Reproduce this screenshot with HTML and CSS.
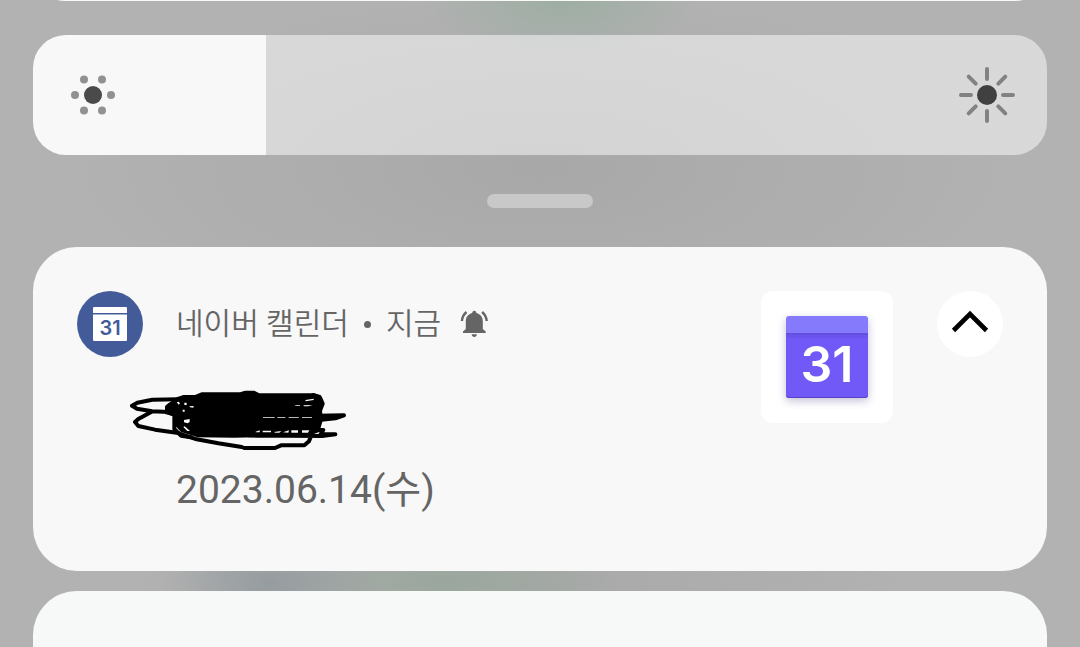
FILE: index.html
```html
<!DOCTYPE html>
<html lang="ko">
<head>
    <meta charset="UTF-8">
    <meta name="viewport" content="width=device-width, initial-scale=1.0">
    <title>알림</title>
    <link rel="stylesheet" href="styles.css">
</head>
<body>

    <div class="quick-panel"></div>

    <div class="brightness">
        <input type="range" class="brightness-slider" aria-label="밝기" min="0" max="100" value="23" style="--level: 23%">
        <svg class="sun-low" viewBox="0 0 60 60" aria-hidden="true">
            <circle cx="30" cy="30" r="9" fill="#4a4a4a"/>
            <g fill="#919191">
                <circle cx="12" cy="30" r="4"/>
                <circle cx="48" cy="30" r="4"/>
                <circle cx="21" cy="14.5" r="4"/>
                <circle cx="39" cy="14.5" r="4"/>
                <circle cx="21" cy="45.5" r="4"/>
                <circle cx="39" cy="45.5" r="4"/>
            </g>
        </svg>
        <svg class="sun-high" viewBox="0 0 60 60" aria-hidden="true">
            <circle cx="30" cy="30" r="10" fill="#404040"/>
            <path d="M30 4v10M30 46v10M4 30h10M46 30h10M11.7 11.7l7 7M41.3 41.3l7 7M48.3 11.7l-7 7M18.7 41.3l-7 7" stroke="#828282" stroke-width="4" stroke-linecap="round"/>
        </svg>
    </div>

    <div class="handle"></div>

    <main class="notifications">
        <article class="card">
            <svg class="app-icon" viewBox="0 0 66 66" aria-hidden="true">
                <circle cx="33" cy="33" r="33" fill="#435c99"/>
                <path d="M17 16h32a1 1 0 0 1 1 1v5H16v-5a1 1 0 0 1 1-1zM16 23.5h34V49a1 1 0 0 1-1 1H17a1 1 0 0 1-1-1z" fill="#fff"/>
                <text class="icon-day" x="33" y="44" font-size="20" fill="#435c99">31</text>
            </svg>

            <div class="content">
                <div class="meta">
                    <span>네이버 캘린더</span>
                    <span class="dot"></span>
                    <span>지금</span>
                    <svg class="bell" viewBox="0 0 28 28" aria-hidden="true">
                        <path d="M14.3.7c1.3 0 2.1.9 2.1 2.4 4 1 6.4 4.2 6.4 8.2V19l2.9 2.6V23H3v-1.4L5.8 19v-7.7c0-4 2.4-7.2 6.4-8.2 0-1.5.8-2.4 2.1-2.4zM11.7 24.3h5.2c-.2 1.7-1.2 2.7-2.6 2.7s-2.4-1-2.6-2.7z" fill="#656565"/>
                        <path d="M1.9 11C2.2 7.2 3.8 4.2 6.5 2M26.7 11c-.3-3.8-1.9-6.8-4.6-9" fill="none" stroke="#656565" stroke-width="2.4"/>
                    </svg>
                </div>
                <svg class="scribble" viewBox="27 27 654 180" aria-hidden="true">
                    <path d="M170 52l20-7h35l20-8h115l15-5h28l15 8h165l20 6 2 26 3 50-10 34-40 14-215 3-110-1-50-16-24-26V108l-24-6V78z"/>
                    <g fill="none" stroke="#000" stroke-width="12" stroke-linecap="round" stroke-linejoin="round">
                        <path d="M175 58l-78 1-45 9-16 9 15 9 45 8 50 2M95 95L55 117l-10 9 10 12 50 11 65 9 60 20 65 12 70 11 8 3h92l18-8h70l14-12 10-26M580 45l20 8 8 18-10 26M590 107l82-1-26 9-56 6M560 150l50 0-8 12 44 1-40 5-220-2"/>
                        <path d="M165 65l-20 12 0 20 18 8v42l20 20 30 5"/>
                    </g>
                    <path d="M170 67l6-2 4 5-4 4zM193 68h7v7h-7zM208 79l13-1-1 5-10-1zM188 89h6v6h-6zM192 120l17-3v9l-6 4-11-3zM190 141l12 12h8l-16-14zM556 60l25-4v4l-24 4zM526 76h14v2h-14zM550 76l28-1-14 4h-12zM429 112h35v2h-35zM472 112h24v2h-24zM506 112h30v2h-30zM546 112h30v2h-30zM407 155l12-4v6h-12zM428 152h25v5h-25zM462 156l22-3-6 5h-12zM489 157l18-6-2 7zM514 151h20v7h-20zM546 151h22l-4 7h-18z" fill="#f8f8f8"/>
                </svg>
                <time class="date" datetime="2023-06-14">2023.06.14(수)</time>
            </div>

            <div class="large-icon">
                <div class="calendar">
                    <svg viewBox="0 0 82 82" aria-hidden="true">
                        <path d="M0 17h82v62a3 3 0 0 1-3 3H3a3 3 0 0 1-3-3z" fill="#7159f8"/>
                        <path d="M0 17h82v2H0z" fill="#654fe0"/>
                        <path d="M0 19h82v3H0z" fill="#6b54ee"/>
                        <path d="M3 0h76a3 3 0 0 1 3 3v14H0V3a3 3 0 0 1 3-3z" fill="#8579fc"/>
                        <path d="M0 79a3 3 0 0 0 3 2h76a3 3 0 0 0 3-2 3 3 0 0 1-3 3H3a3 3 0 0 1-3-3z" fill="#5942c4"/>
                        <text class="icon-day" x="41" y="66" font-size="50" fill="#fff">31</text>
                    </svg>
                </div>
            </div>

            <button type="button" class="collapse" aria-label="접기">
                <svg viewBox="0 0 66 66" aria-hidden="true">
                    <path d="M16.5 39.5L33 23 49.5 39.5" fill="none" stroke="#000" stroke-width="4.6"/>
                </svg>
            </button>
        </article>

        <article class="card next-card"></article>
    </main>

</body>
</html>
```
FILE: styles.css
```css
* {
    box-sizing: border-box;
}

body {
    margin: 0;
    padding: 0 33px;
    height: 100vh;
    overflow: hidden;
    display: flex;
    flex-direction: column;
    font-family: Roboto, "Noto Sans CJK KR", sans-serif;
    color: #656565;
    background-color: #b2b2b2;
    background-image:
        radial-gradient(ellipse 140px 60px at 52% 0, #9daea3, transparent),
        radial-gradient(ellipse 110px 60px at 25% 90%, #959c9f, transparent),
        radial-gradient(ellipse 180px 60px at 41% 90%, #9aa79d, transparent),
        radial-gradient(ellipse 400px 80px at 48% 90%, #a8a8a8, transparent),
        radial-gradient(ellipse 480px 180px at 50% 26%, #a8a8a8, transparent);
}

.quick-panel {
    flex: none;
    height: 64px;
    margin-top: -63px;
    border-radius: 32px;
    background-color: #f8f8f8;
}

.brightness {
    position: relative;
    flex: none;
    height: 120px;
    margin-top: 34px;
}

.brightness-slider {
    appearance: none;
    display: block;
    width: 100%;
    height: 100%;
    margin: 0;
    border-radius: 33px;
    background: linear-gradient(to right, #f8f8f8 var(--level), rgba(255, 255, 255, 0.5) var(--level));
    cursor: pointer;
}

.brightness-slider::-webkit-slider-thumb {
    appearance: none;
    width: 1px;
    height: 120px;
    background: transparent;
}

.sun-low,
.sun-high {
    position: absolute;
    top: 30px;
    width: 60px;
    height: 60px;
    pointer-events: none;
}

.sun-low {
    left: 30px;
}

.sun-high {
    right: 30px;
}

.handle {
    flex: none;
    align-self: center;
    width: 106px;
    height: 14px;
    margin: 39px 0;
    border-radius: 7px;
    background-color: #c8c8c8;
}

.notifications {
    flex: 1;
    display: flex;
    flex-direction: column;
    gap: 20px;
}

.card {
    display: flex;
    align-items: flex-start;
    padding: 44px 44px 57px;
    border-radius: 44px;
    background-color: #f8f8f8;
}

.next-card {
    flex: 1;
    padding: 0;
    border-radius: 44px 44px 0 0;
    background-color: #f7f8f8;
}

.app-icon {
    flex: none;
    width: 66px;
    height: 66px;
}

.icon-day {
    font-family: Inter, sans-serif;
    font-weight: 600;
    text-anchor: middle;
}

.content {
    flex: 1;
    display: flex;
    flex-direction: column;
    align-items: flex-start;
    padding-left: 33px;
}

.meta {
    display: flex;
    align-items: center;
    height: 66px;
    font-size: 30px;
    font-weight: 350;
    line-height: 40px;
}

.dot {
    width: 7px;
    height: 7px;
    margin: 0 15px;
    border-radius: 50%;
    background-color: #656565;
}

.bell {
    width: 28px;
    height: 28px;
    margin-left: 19px;
}

.scribble {
    width: 218px;
    height: 60px;
    margin: 32px 0 0 -47px;
    overflow: visible;
}

.date {
    margin-top: 17px;
    font-size: 39px;
    line-height: 48px;
}

.large-icon {
    flex: none;
    width: 132px;
    height: 132px;
    padding: 25px;
    border-radius: 12px;
    background-color: #fff;
}

.calendar {
    width: 82px;
    height: 82px;
    border-radius: 3px;
    box-shadow: 0 3px 8px rgba(60, 50, 120, 0.3);
}

.calendar svg,
.collapse svg {
    display: block;
}

.collapse {
    flex: none;
    width: 66px;
    height: 66px;
    margin-left: 44px;
    padding: 0;
    border: none;
    border-radius: 50%;
    background-color: #fff;
    cursor: pointer;
}
```
